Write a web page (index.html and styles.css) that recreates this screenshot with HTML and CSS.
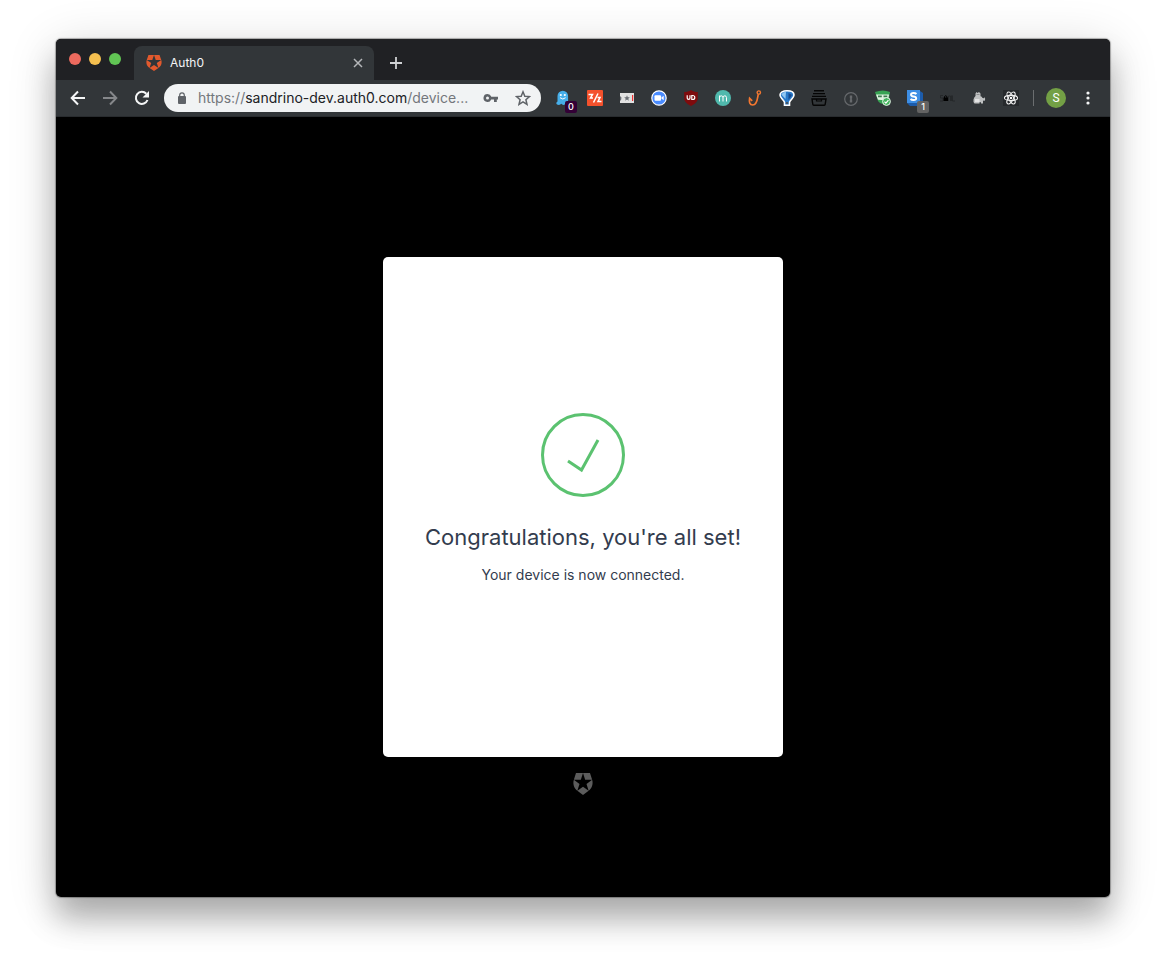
FILE: index.html
```html
<!DOCTYPE html>
<html lang="en">
<head>
<meta charset="utf-8">
<title>Auth0</title>
<link rel="stylesheet" href="styles.css">
</head>
<body>
<div class="window">
  <header class="tabstrip">
    <div class="lights">
      <button class="light red" aria-label="Close window"></button>
      <button class="light yellow" aria-label="Minimize window"></button>
      <button class="light green" aria-label="Zoom window"></button>
    </div>
    <div class="tab">
      <svg class="favicon" viewBox="1 0 22 24" preserveAspectRatio="none"><path d="M21.98 7.448L19.62 0H4.347L2.02 7.448c-1.352 4.312.03 9.206 3.815 12.015L12.007 24l6.157-4.552c3.755-2.81 5.182-7.688 3.815-12.015l-6.16 4.58 2.343 7.45-6.157-4.597-6.158 4.58 2.358-7.433-6.188-4.55 7.63-.045L12.008 0l2.356 7.404 7.615.044z"/></svg>
      <span class="tab-title">Auth0</span>
      <button class="tab-close" aria-label="Close tab"><svg width="10" height="10" viewBox="0 0 10 10"><path d="M1 1l8 8M9 1l-8 8" stroke="#b4b6b9" stroke-width="1.500"/></svg></button>
    </div>
    <button class="new-tab" aria-label="New tab"><svg width="12" height="12" viewBox="0 0 12 12"><path d="M6 0v12M0 6h12" stroke="#d0d2d4" stroke-width="1.800"/></svg></button>
  </header>

  <nav class="toolbar">
    <button class="tool" aria-label="Back"><svg width="16" height="16" viewBox="0 0 16 16"><path d="M15 8H2M8 1.500L1.700 8 8 14.500" fill="none" stroke="#f4f5f6" stroke-width="2"/></svg></button>
    <button class="tool" aria-label="Forward"><svg width="16" height="16" viewBox="0 0 16 16"><path d="M1 8h13M8 1.500L14.300 8 8 14.500" fill="none" stroke="#85878a" stroke-width="2"/></svg></button>
    <button class="tool" aria-label="Reload"><svg width="16" height="16" viewBox="0 0 16 16"><path d="M13.500 10A6 6 0 1 1 12.300 3.800" fill="none" stroke="#f4f5f6" stroke-width="2"/><path d="M15 1v6.500H8.500z" fill="#f4f5f6"/></svg></button>
    <div class="omnibox">
      <svg class="lock" width="10" height="12" viewBox="0 0 10 12"><rect x="1" y="4" width="8" height="8" rx="1" fill="#5f6368"/><path d="M2.700 5V3.200a2.300 2.300 0 0 1 4.600 0V5" fill="none" stroke="#5f6368" stroke-width="1.200"/></svg>
      <span class="url">https://<b>sandrino-dev.auth0.com</b>/device...</span>
      <button class="tool" aria-label="Passwords"><svg width="16" height="16" viewBox="0 0 16 16"><path fill-rule="evenodd" d="M4.500 4a4 4 0 0 1 3.800 2.700H15v2.800h-1.200V12H11V9.500H8.200A4 4 0 1 1 4.500 4zm0 2.500a1.500 1.500 0 1 0 0 3 1.500 1.500 0 0 0 0-3z" fill="#5f6368"/></svg></button>
      <button class="tool" aria-label="Bookmark this page"><svg width="16" height="16" viewBox="0 0 16 16"><path d="M8 1.800l1.800 4.400 4.700.4-3.600 3.100 1.100 4.600L8 11.800l-4 2.500 1.100-4.600L1.500 6.600l4.700-.4z" fill="none" stroke="#5f6368" stroke-width="1.500"/></svg></button>
    </div>
    <div class="extensions">
      <button class="tool" aria-label="Ghostery"><svg width="16" height="16" viewBox="0 0 16 16"><path d="M2 14.500c-1-1-1-2 .5-3V6a5 5 0 0 1 10.600 0v5c.2 2 .5 3 1.200 4-2 .2-3-.4-4-1-1.500 1.500-3 1-4-.2-1 1.200-2.500 1.500-4.300.7z" fill="#46aee9"/><circle cx="5.800" cy="5" r="1.100" fill="#fff"/><circle cx="9.800" cy="5" r="1.100" fill="#fff"/><path d="M5 7.700q2.800 2.600 5.600 0" fill="none" stroke="#fff"/></svg><span class="count purple">0</span></button>
      <button class="tool" aria-label="Request tool"><svg width="16" height="16" viewBox="0 0 16 16"><rect width="16" height="16" rx="1" fill="#f4512c"/><path d="M1.500 4.500h4L3.500 8H6M11 3.500L6.500 12.500M10.500 7.500H13l-2 4h3.500" fill="none" stroke="#fff" stroke-width="1.500"/></svg></button>
      <button class="tool" aria-label="Stars"><svg width="14" height="10" viewBox="0 0 14 10"><path fill="#e1e1e1" d="M0 0h14v10H0z"/><path d="M7 2.300l.8 1.900 2 .1-1.500 1.400.5 2L7 6.600 5.200 7.700l.5-2-1.500-1.400 2-.1zM0 3l1.500 1.500L1 7.500H0z" fill="#6a6e74"/><path d="M12 2h1.200v6H12z" fill="#e33"/></svg></button>
      <button class="tool" aria-label="Zoom"><svg width="16" height="16" viewBox="0 0 16 16"><circle cx="8" cy="8" r="7.200" fill="#4a8cff" stroke="#fff" stroke-width="1.200"/><rect x="3.500" y="5.200" width="6.500" height="5.600" rx="1" fill="#fff"/><path d="M10.400 7.500l2.300-1.700v4.400l-2.300-1.700z" fill="#fff"/></svg></button>
      <button class="tool" aria-label="uBlock Origin"><svg width="16" height="16" viewBox="0 0 16 16"><path d="M8 0c2 1.500 4 2 6.800 2v6c0 4-3.300 6-6.800 8-3.500-2-6.800-4-6.800-8V2C4 2 6 1.500 8 0z" fill="#7e0b0d"/><path d="M4.200 5.300V8a1.400 1.400 0 0 0 2.800 0V5.300M8.800 5.500v4h1a2 2 0 0 0 0-4z" fill="none" stroke="#fff" stroke-width="1.200"/></svg></button>
      <button class="tool" aria-label="Momentum"><svg width="16" height="16" viewBox="0 0 16 16"><circle cx="8" cy="8" r="8" fill="#50b9ad"/><path d="M4.500 11.500V5.500M4.500 7.300Q4.800 5.800 6.300 5.800T8 7.500v4M8 7.500Q8.200 5.800 9.800 5.800t1.700 1.700v4" fill="none" stroke="#fff"/></svg></button>
      <button class="tool" aria-label="Hook"><svg width="16" height="16" viewBox="0 0 16 16"><path d="M11.200 4.500C10.500 8 10.200 15 5.800 15 2.500 15 2 12 2.600 8.300l2.600 2.500" fill="none" stroke="#f47730" stroke-width="1.700"/><circle cx="11.800" cy="2.600" r="1.700" fill="none" stroke="#f47730" stroke-width="1.400"/></svg></button>
      <button class="tool" aria-label="Balloon"><svg width="16" height="16" viewBox="0 0 16 16"><path d="M8 .8c4 0 7 1.500 7 4.200 0 2.500-3.500 4.500-4.500 7.300v2.900h-5v-2.900C4.500 9.500 1 7.500 1 5 1 2.300 4 .8 8 .8z" fill="#2979c8" stroke="#fff" stroke-width="1.600"/><path d="M2.300 4.500Q4 2 7 1.800L6.500 9z" fill="#8fc6f2"/><path d="M9.500 3l3.500 2-3.500 5z" fill="#174a8e"/><path d="M6.800 12h2.400v2H6.800z" fill="#456"/></svg></button>
      <button class="tool" aria-label="Stack"><svg width="16" height="16" viewBox="0 0 16 16"><path d="M3 .8h10M2 3.600h12M1 6.400h14M1 9h14l-.8 5.300q-.1 1-1 1H2.800q-.9 0-1-1z" fill="none" stroke="#050505" stroke-width="1.400"/><path d="M5.500 9v2h5V9" fill="none" stroke="#050505" stroke-width="1.200"/></svg></button>
      <button class="tool" aria-label="1Password"><svg width="16" height="16" viewBox="0 0 16 16"><circle cx="8" cy="9" r="6.300" fill="none" stroke="#66696c" stroke-width="1.200"/><path d="M6.800 5.500h2.400v2.800l-.6.700.6.700v2.800H6.800V9.700l.6-.7-.6-.7z" fill="#66696c"/></svg></button>
      <button class="tool" aria-label="Traffic check"><svg width="16" height="16" viewBox="0 0 16 16"><path d="M0 2q8-3 15 0l-.5 3-1 6Q7 17 3 11L1 5z" fill="#37a353"/><path d="M1 4.500h13l-.7 4-3.500 1.700-6.800-.5z" fill="#e0f3e2"/><path d="M3 5.500h3.800v1.700H3zM8.500 5.500h3.800v1.700H8.500z" fill="#3d7a4e"/><circle cx="11.500" cy="11.500" r="3.900" fill="#42b45c" stroke="#e8f5ea"/><path d="M9.500 11.700l1.400 1.400 2.500-3" fill="none" stroke="#fff" stroke-width="1.200"/></svg></button>
      <button class="tool" aria-label="Stylish"><svg width="16" height="16" viewBox="0 0 16 16"><path d="M13 1l3 2v13H3l-3-3z" fill="#1c5cab"/><path d="M0 0h13v13H0z" fill="#3d8ee4"/><path d="M9.500 4Q8.500 3 6.500 3 4 3 4 4.800q0 1.500 2.500 1.700T9.200 8.200Q9.200 10 6.500 10 4.500 10 3.500 9" fill="none" stroke="#fff" stroke-width="1.900"/></svg><span class="count gray">1</span></button>
      <button class="tool" aria-label="SAML"><svg width="16" height="16" viewBox="0 0 16 16"><path d="M4 5.500H1.500v2.500H4v3H1M9.500 11V6h2v5M12.500 11V5.500M13.500 5.500V11H16" fill="none" stroke="#222527" stroke-width=".8"/><path d="M4.500 7.500h4.500V11H4.500z" fill="#000"/><path d="M5.500 8V6.500q1.200-1.500 2.400 0V8" fill="none" stroke="#000"/></svg></button>
      <button class="tool" aria-label="Postman"><svg width="14" height="14" viewBox="0 0 14 14"><path d="M3.500 2.500L4.500 1l1 1L7 1l1.500 1.500v2.700q1.500.3 2 1.800l1.500.3.500-1.300.7 2-.7 2-1.500-.5v3H9V11.300H7.500v1.200H2.500Q1 11.500 1.500 8.500 2 6 3.500 5z" fill="#bfc1c2"/><path d="M3 8h4.500v3H3z" fill="#e3e3e3"/><path d="M4.500 3.500h3" stroke="#8b8d8f"/></svg></button>
      <button class="tool" aria-label="React Developer Tools"><svg width="16" height="16" viewBox="0 0 16 16"><path d="M0 0h16v16H0z" fill="#26292c"/><g fill="none" stroke="#f1f1f1" stroke-width="1.100"><ellipse cx="8" cy="8" rx="6.600" ry="2.600"/><ellipse cx="8" cy="8" rx="6.600" ry="2.600" transform="rotate(60 8 8)"/><ellipse cx="8" cy="8" rx="6.600" ry="2.600" transform="rotate(120 8 8)"/></g><circle cx="8" cy="8" r="1.200" fill="#fff"/></svg></button>
    </div>
    <span class="divider"></span>
    <button class="tool" aria-label="Profile"><span class="avatar">S</span></button>
    <button class="tool" aria-label="Menu"><svg width="4" height="14" viewBox="0 0 4 14"><g fill="#f4f5f6"><circle cx="2" cy="2" r="1.600"/><circle cx="2" cy="7" r="1.600"/><circle cx="2" cy="12" r="1.600"/></g></svg></button>
  </nav>

  <main class="page">
    <section class="card">
      <svg class="check" width="84" height="84" viewBox="0 0 84 84"><g fill="none" stroke="#5bc270" stroke-width="3"><circle cx="42" cy="42" r="40.500"/><path d="M27 48l13.500 9L57 27"/></g></svg>
      <h1>Congratulations, you're all set!</h1>
      <p>Your device is now connected.</p>
    </section>
    <svg class="brand" role="img" aria-label="Auth0" viewBox="0 0 24 24"><path d="M21.98 7.448L19.62 0H4.347L2.02 7.448c-1.352 4.312.03 9.206 3.815 12.015L12.007 24l6.157-4.552c3.755-2.81 5.182-7.688 3.815-12.015l-6.16 4.58 2.343 7.45-6.157-4.597-6.158 4.58 2.358-7.433-6.188-4.55 7.63-.045L12.008 0l2.356 7.404 7.615.044z"/></svg>
  </main>
</div>
</body>
</html>
```
FILE: styles.css
```css
* {
  box-sizing: border-box;
}

body {
  margin: 0;
  min-height: 100vh;
  padding: 39px 56px 74px;
  display: flex;
  background: #fff;
  font-family: Inter, "Liberation Sans", sans-serif;
}

button {
  border: 0;
  padding: 0;
  background: none;
  font: inherit;
}

svg {
  display: block;
}

.window {
  flex: 1;
  min-width: 0;
  display: flex;
  flex-direction: column;
  border-radius: 5px;
  overflow: hidden;
  background: #000;
  box-shadow: 0 0 1px 1px rgba(0, 0, 0, 0.3), 0 22px 30px rgba(0, 0, 0, 0.26), 0 8px 50px rgba(0, 0, 0, 0.16);
}

.tabstrip {
  display: flex;
  align-items: flex-end;
  height: 41px;
  background: #202124;
}

.lights {
  display: flex;
  gap: 8px;
  width: 78px;
  height: 41px;
  padding: 14px 0 0 13px;
}

.light {
  width: 12px;
  height: 12px;
  border-radius: 50%;
}

.red {
  background: #ed6a5e;
}

.yellow {
  background: #f5bf4f;
}

.green {
  background: #61c554;
}

.tab {
  display: flex;
  align-items: center;
  gap: 8px;
  width: 240px;
  height: 34px;
  padding: 0 11px 0 12px;
  border-radius: 8px 8px 0 0;
  background: #323639;
  color: #f4f5f6;
}

.favicon {
  width: 16px;
  height: 16px;
  fill: #e2592d;
}

.tab-title {
  flex: 1;
  font-size: 12px;
  font-weight: 400;
  line-height: 16px;
}

.new-tab {
  display: grid;
  place-items: center;
  width: 28px;
  height: 34px;
  margin-left: 8px;
}

.toolbar {
  display: flex;
  align-items: center;
  height: 37px;
  padding: 0 6px;
  background: #323639;
  border-bottom: 1px solid #282b2e;
}

.tool {
  position: relative;
  display: grid;
  place-items: center;
  flex: none;
  width: 32px;
  height: 28px;
}

.omnibox {
  display: flex;
  align-items: center;
  flex: 1;
  min-width: 0;
  height: 28px;
  margin: 0 6px;
  padding: 0 2px 0 13px;
  border-radius: 14px;
  background: #f1f3f4;
}

.lock {
  flex: none;
}

.url {
  flex: 1;
  min-width: 0;
  margin-left: 11px;
  overflow: hidden;
  white-space: nowrap;
  font-size: 14px;
  line-height: 16px;
  color: #74777c;
}

.url b {
  font-weight: 400;
  color: #202124;
}

.extensions {
  display: flex;
}

.count {
  position: absolute;
  right: 2px;
  bottom: -1px;
  width: 12px;
  height: 12px;
  border-radius: 2px;
  color: #fff;
  font-size: 9px;
  font-weight: 500;
  line-height: 12px;
  text-align: center;
}

.purple {
  background: #330036;
}

.gray {
  background: #636363;
}

.divider {
  width: 1px;
  height: 16px;
  margin: 0 6px;
  background: #6b6e70;
}

.avatar {
  width: 20px;
  height: 20px;
  border-radius: 50%;
  background: #73a045;
  color: #fff;
  font-family: Roboto, sans-serif;
  font-size: 12px;
  line-height: 20px;
  text-align: center;
}

.page {
  flex: 1;
  display: grid;
  grid-template-rows: 1fr auto 1fr;
  justify-items: center;
}

.card {
  grid-row: 2;
  display: flex;
  flex-direction: column;
  align-items: center;
  justify-content: center;
  width: 400px;
  min-height: 500px;
  padding: 16px 16px 32px;
  border-radius: 5px;
  background: #fff;
  color: #333c4e;
  text-align: center;
}

.card h1 {
  margin: 24px 0 12px;
  font-size: 22px;
  font-weight: 400;
  line-height: 32px;
}

.card p {
  margin: 0;
  font-size: 14px;
  line-height: 20px;
}

.brand {
  grid-row: 3;
  width: 22px;
  height: 22px;
  margin-top: 16px;
  fill: #5c5c5c;
}
```
